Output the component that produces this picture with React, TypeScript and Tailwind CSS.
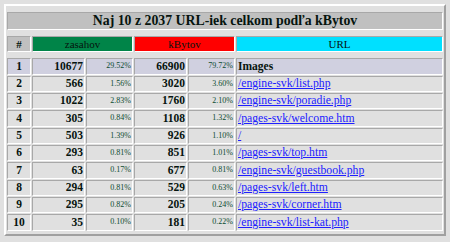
const rows = [
  { n: 1, hits: '10677', hp: '29.52%', kb: '66900', kp: '79.72%', url: 'Images', group: true },
  { n: 2, hits: '566', hp: '1.56%', kb: '3020', kp: '3.60%', url: '/engine-svk/list.php' },
  { n: 3, hits: '1022', hp: '2.83%', kb: '1760', kp: '2.10%', url: '/engine-svk/poradie.php' },
  { n: 4, hits: '305', hp: '0.84%', kb: '1108', kp: '1.32%', url: '/pages-svk/welcome.htm' },
  { n: 5, hits: '503', hp: '1.39%', kb: '926', kp: '1.10%', url: '/' },
  { n: 6, hits: '293', hp: '0.81%', kb: '851', kp: '1.01%', url: '/pages-svk/top.htm' },
  { n: 7, hits: '63', hp: '0.17%', kb: '677', kp: '0.81%', url: '/engine-svk/guestbook.php' },
  { n: 8, hits: '294', hp: '0.81%', kb: '529', kp: '0.63%', url: '/pages-svk/left.htm' },
  { n: 9, hits: '295', hp: '0.82%', kb: '205', kp: '0.24%', url: '/pages-svk/corner.htm' },
  { n: 10, hits: '35', hp: '0.10%', kb: '181', kp: '0.22%', url: '/engine-svk/list-kat.php' },
]

// inset cell border like an old html table with border=2
const cell = 'border border-t-[#a8a8a8] border-l-[#a8a8a8] border-r-white border-b-white flex items-center px-px'

export default function App() {
  return (
    <div className="min-h-screen bg-[#e0e0e0] pl-[4px] pt-[4px] font-['Liberation_Serif',serif] text-[#06140e]">
      <div className="w-[442px] border-2 border-t-white border-l-white border-r-[#a0a0a0] border-b-[#a0a0a0] p-px pb-[3.5px]">
        <div className="grid grid-cols-[24px_53px_47px_53px_47px_207px] gap-px">
          <div className="col-span-6 h-[4px]" />

          {/* title */}
          <div className={`${cell} col-span-6 h-[18px] justify-center bg-[#c0c0c0] text-[13.8px] font-bold leading-none`}>
            Naj 10 z 2037 URL-iek celkom podľa kBytov
          </div>

          <div className="col-span-6 h-[4px]" />

          {/* header */}
          <div className={`${cell} h-[16.33px] justify-center bg-[#c0c0c0] text-[11px] font-bold leading-none`}>#</div>
          <div className={`${cell} col-span-2 justify-center bg-[#008448] text-[11px] leading-none`}>zasahov</div>
          <div className={`${cell} col-span-2 justify-center bg-[#ff0000] text-[11px] leading-none`}>kBytov</div>
          <div className={`${cell} justify-center bg-[#00e0ff] text-[11px] leading-none`}>URL</div>

          <div className="col-span-6 h-[4px]" />

          {rows.map((r) => {
            const bg = r.group ? 'bg-[#d0d0e0]' : 'bg-[#e0e0e0]'
            return (
              <div key={r.n} className="contents">
                <div className={`${cell} ${bg} h-[16.33px] justify-center text-[11.5px] font-bold leading-none`}>{r.n}</div>
                <div className={`${cell} ${bg} justify-end text-[11.5px] font-bold leading-none`}>{r.hits}</div>
                <div className={`${cell} ${bg} justify-end text-[8px] leading-none text-[#0b4a30]`}>{r.hp}</div>
                <div className={`${cell} ${bg} justify-end text-[11.5px] font-bold leading-none`}>{r.kb}</div>
                <div className={`${cell} ${bg} justify-end text-[8px] leading-none text-[#0b4a30]`}>{r.kp}</div>
                <div className={`${cell} ${bg} leading-none`}>
                  {r.group ? (
                    <span className="text-[11.5px] font-bold">{r.url}</span>
                  ) : (
                    <a href="#" className="text-[11.7px] text-[#2020ff] underline">
                      {r.url}
                    </a>
                  )}
                </div>
              </div>
            )
          })}
        </div>
      </div>
    </div>
  )
}
